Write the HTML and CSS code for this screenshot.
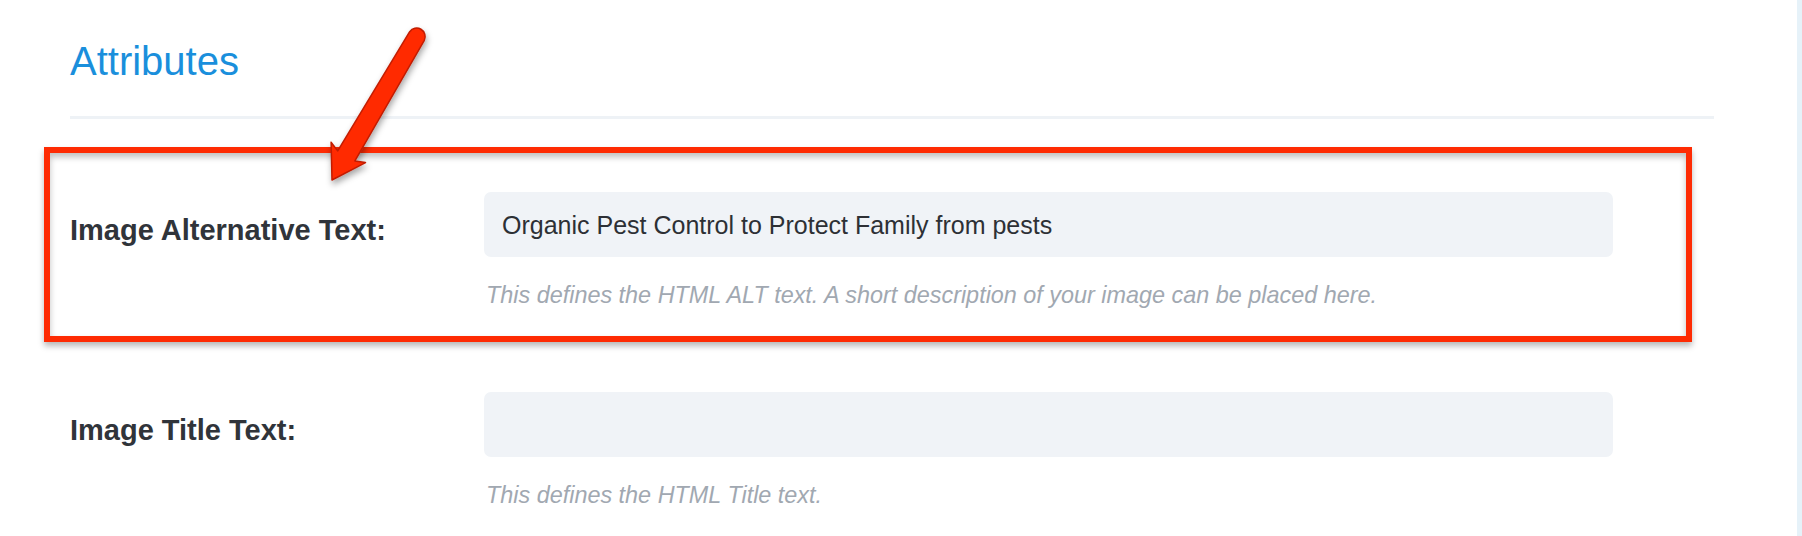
FILE: index.html
```html
<!DOCTYPE html>
<html lang="en">
<head>
    <meta charset="UTF-8">
    <meta name="viewport" content="width=device-width, initial-scale=1.0">
    <title>Attributes</title>
    <link rel="stylesheet" href="styles.css">
</head>
<body>
    <div class="page">
        <div class="main">
            <h2 class="section-title">Attributes</h2>
            <hr class="divider">

            <div class="field highlighted">
                <label class="field-label" for="altText">Image Alternative Text:</label>
                <div class="field-body">
                    <input type="text" id="altText" class="field-input" value="Organic Pest Control to Protect Family from pests">
                    <p class="field-help">This defines the HTML ALT text. A short description of your image can be placed here.</p>
                </div>
            </div>

            <div class="field">
                <label class="field-label" for="titleText">Image Title Text:</label>
                <div class="field-body">
                    <input type="text" id="titleText" class="field-input" value="">
                    <p class="field-help">This defines the HTML Title text.</p>
                </div>
            </div>
        </div>
        <div class="aside"></div>
    </div>

    <!-- annotation arrow drawn over the form -->
    <svg class="arrow" width="500" height="220" viewBox="0 0 500 220">
        <defs>
            <filter id="arrowShadow" x="-20%" y="-20%" width="150%" height="150%">
                <feDropShadow dx="1" dy="4" stdDeviation="3" flood-color="#000" flood-opacity="0.35"/>
            </filter>
        </defs>
        <path d="M332,180 L365.5,162.6 L354.9,160.9 L424.3,40.3 A8.5,8.5 0 0 0 409.7,31.7 L337.7,150.9 L331.1,142.2 Z"
              fill="#ff2a00" stroke="#c21c00" stroke-width="1.5" stroke-linejoin="round" filter="url(#arrowShadow)"/>
    </svg>
</body>
</html>
```

FILE: styles.css
```css
body {
    margin: 0;
    background-color: #fff;
    font-family: "Liberation Sans", Arial, sans-serif;
}

.page {
    display: flex;
    min-height: 100vh;
}

.main {
    flex: 1;
    padding: 36px 0 0 70px;
}

.aside {
    width: 5px;
    background-color: #e6f2f9;
}

.section-title {
    margin: 0;
    font-weight: normal;
    font-size: 40px;
    line-height: 50px;
    color: #1a8fdc;
}

.divider {
    width: 1644px;
    height: 3px;
    margin: 30px 0 0 0;
    border: 0;
    background-color: #eef2f6;
}

.field {
    display: flex;
    box-sizing: border-box;
    width: 1648px;
    margin-left: -26px;
    padding: 39px 0 26px 20px;
    border: 6px solid transparent;
}

.field + .field {
    margin-top: 5px;
}

.highlighted {
    margin-top: 28px;
    border-color: #fe2b03;
    box-shadow: 0 4px 6px rgba(0, 0, 0, 0.28), inset 0 4px 6px rgba(0, 0, 0, 0.25);
}

.field-label {
    flex: none;
    width: 414px;
    padding-top: 22px;
    font-weight: bold;
    font-size: 29px;
    line-height: 33px;
    color: #30343a;
}

.field-body {
    width: 1129px;
}

.field-input {
    display: block;
    box-sizing: border-box;
    width: 100%;
    height: 65px;
    padding: 2px 18px 0 18px;
    border: 0;
    border-radius: 7px;
    background-color: #f0f3f7;
    font-family: "Liberation Sans", Arial, sans-serif;
    font-size: 25px;
    color: #2d3035;
    outline: none;
}

.field-help {
    margin: 23px 0 0 2px;
    font-style: italic;
    font-size: 23.4px;
    line-height: 30px;
    color: #a1a8b1;
}

.arrow {
    position: absolute;
    left: 0;
    top: 0;
    pointer-events: none;
}
```
